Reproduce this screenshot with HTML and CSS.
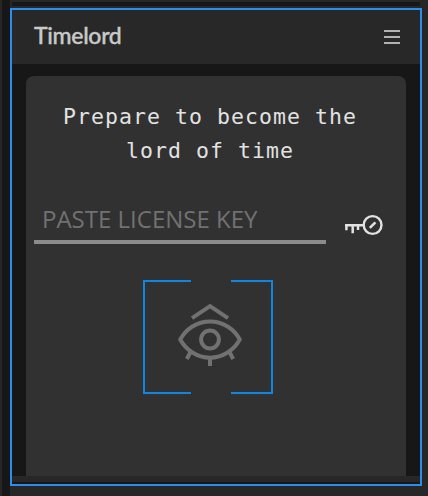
FILE: index.html
```html
<!DOCTYPE html>
<html lang="en">
<head>
<meta charset="utf-8">
<title>Timelord</title>
<link rel="stylesheet" href="styles.css">
</head>
<body>
<div class="workspace">
  <main class="panel">
    <header class="panel-header">
      <h1 class="title">Timelord</h1>
      <button class="menu" aria-label="Menu"><span></span><span></span><span></span></button>
    </header>
    <div class="panel-body">
      <section class="card">
        <p class="lead">Prepare to become the<br>lord of time</p>
        <div class="license">
          <input class="license-input" type="text" placeholder="PASTE LICENSE KEY">
          <svg class="key" viewBox="0 0 40 22" fill="none" stroke="#e2e2e2">
            <circle cx="28.6" cy="11" r="8.9" stroke-width="2.4"/>
            <path d="M1 11.2H20M2.4 11V16.2M8.7 11V19.2M14 11V16" stroke-width="2.5"/>
            <path d="M25.8 13.9L31.4 8.3" stroke-width="2.6"/>
          </svg>
        </div>
        <div class="viewfinder">
          <svg class="brackets" viewBox="0 0 130 114" fill="none" stroke="#0e86e2" stroke-width="2">
            <path d="M48 1H1V113H48M88 1H129V113H88"/>
          </svg>
          <svg class="eye" viewBox="0 0 64 64" fill="none" stroke="#717171" stroke-width="4">
            <path d="M14 15.2L32 3.2L50 15.2"/>
            <path d="M2.2 36.5C8 26 19 18.4 32 18.4S56 26 61.8 36.5C56 47 45 54.7 32 54.7S8 47 2.2 36.5Z" stroke-linejoin="round"/>
            <circle cx="32" cy="36.5" r="8.9"/>
            <path d="M12.8 48.5L8.8 56M32 54V63M51.2 48.5L55.2 56"/>
          </svg>
        </div>
      </section>
    </div>
    <footer class="panel-footer"></footer>
  </main>
</div>
</body>
</html>
```
FILE: styles.css
```css
* { box-sizing: border-box; }
body { margin: 0; background: #272727; }
.workspace {
  width: 428px;
  height: 496px;
  padding: 8px 6px 10px 10px;
  background:
    linear-gradient(#171717, #171717) 2px 0 / 8px 496px no-repeat,
    linear-gradient(#171717, #171717) 12px 2px / 408px 4px no-repeat,
    #272727;
}
.panel {
  display: flex;
  flex-direction: column;
  height: 478px;
  border: 2px solid #2c8eeb;
  background: #171717;
}
.panel-header {
  display: flex;
  align-items: center;
  justify-content: space-between;
  height: 54px;
  padding: 0 20px 0 22px;
  background: #282828;
}
.title {
  margin: 0 0 4px;
  color: #c9c9c9;
  font: 500 23px/32px Lato, sans-serif;
  letter-spacing: -0.3px;
  -webkit-text-stroke: 0.4px #c9c9c9;
}
.menu {
  display: flex;
  flex-direction: column;
  gap: 4px;
  width: 16px;
  padding: 0;
  border: 0;
  background: none;
}
.menu span { height: 2px; background: #b2b2b2; }
.panel-body { height: 412px; padding: 12px 14px 0; }
.card {
  display: flex;
  flex-direction: column;
  height: 400px;
  padding: 24px 8px 0;
  border-radius: 8px 8px 0 0;
  background: #313131;
}
.lead {
  margin: 0 12px 0 0;
  color: #e2e2e2;
  font: 21.5px/34px "DejaVu Sans Mono", monospace;
  letter-spacing: 1.06px;
  text-align: center;
}
.license {
  display: flex;
  align-items: flex-end;
  gap: 18px;
  height: 76px;
}
.license-input {
  width: 292px;
  height: 44px;
  padding: 0 8px 4px;
  border: 0;
  border-bottom: 4px solid #8b8b8b;
  outline: 0;
  background: none;
  color: #e2e2e2;
  font: 24px/36px "Open Sans", sans-serif;
}
.license-input::placeholder { color: #717171; opacity: 1; }
.key { width: 40px; height: 22px; margin-bottom: 8px; }
.viewfinder {
  display: grid;
  width: 130px;
  height: 114px;
  margin: 36px 0 0 109px;
}
.brackets, .eye { grid-area: 1 / 1; }
.brackets { width: 130px; height: 114px; }
.eye { width: 64px; height: 64px; margin: 23px 0 0 35px; }
.panel-footer {
  height: 8px;
  border-bottom: 2px solid #171717;
  background: #272727;
}
```
